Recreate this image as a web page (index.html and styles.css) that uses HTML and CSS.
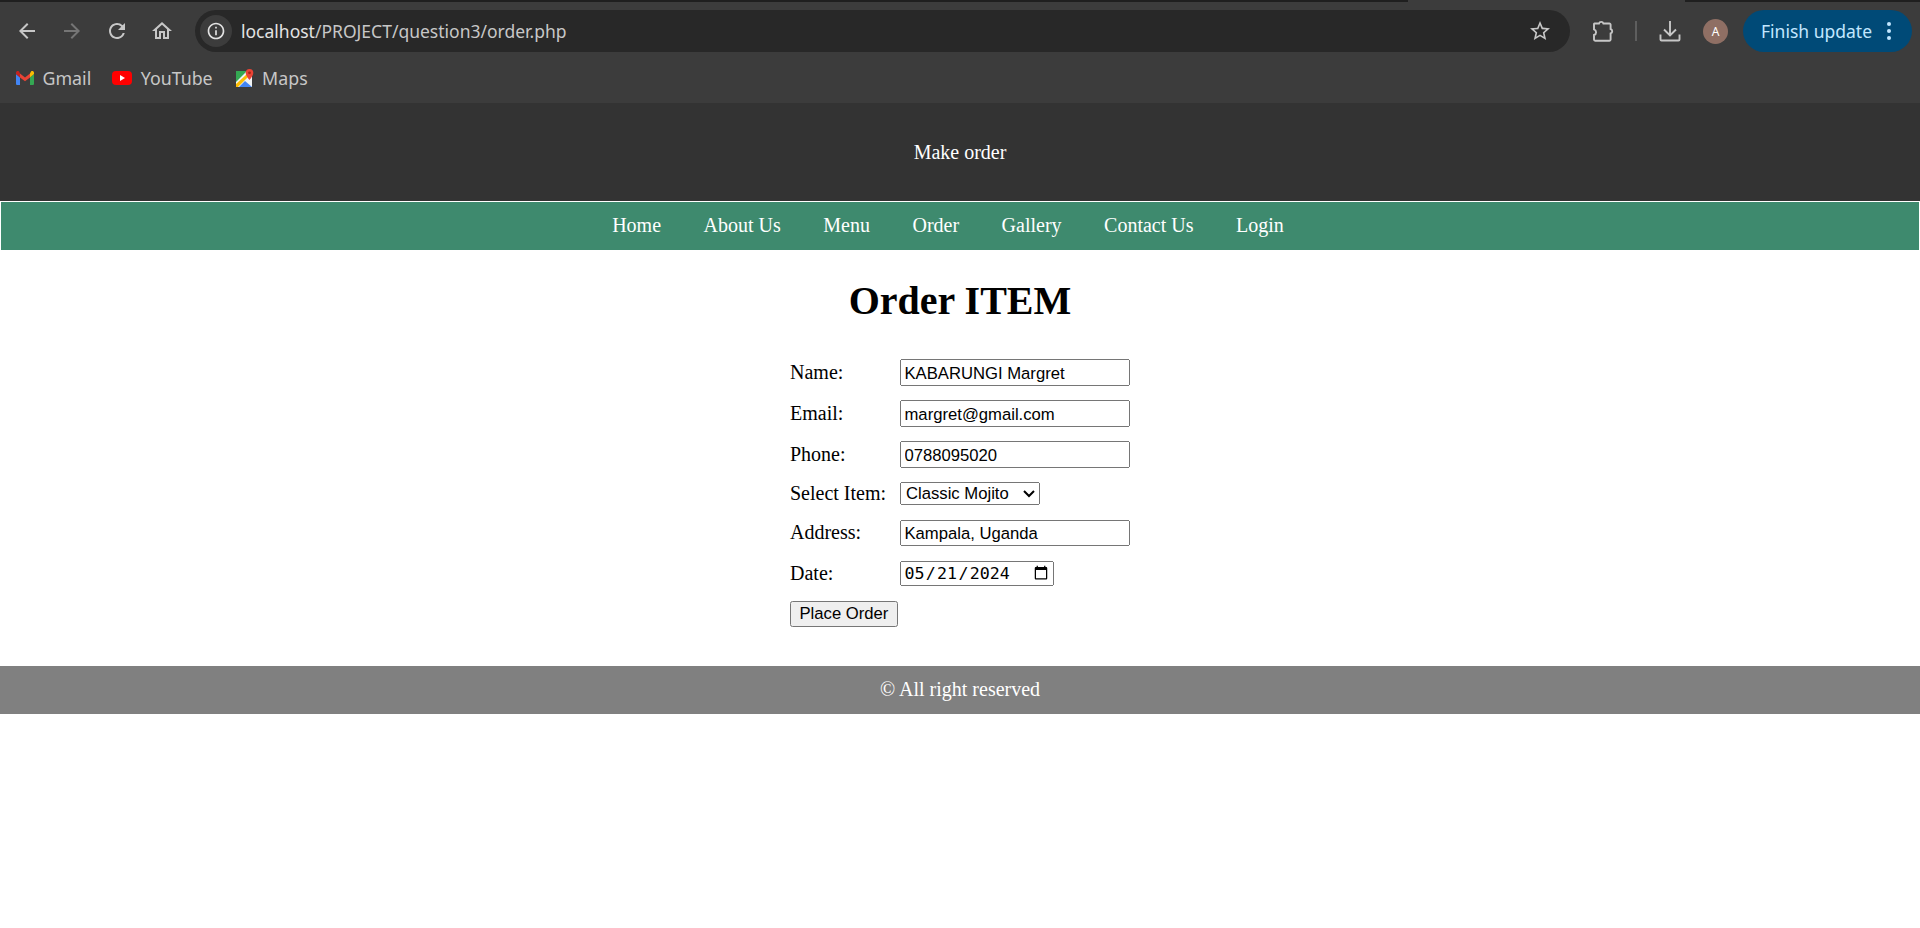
FILE: index.html
```html
<!DOCTYPE html>
<html lang="en">
    <head>
        <meta charset="UTF-8" />
        <meta name="viewport" content="width=device-width, initial-scale=1.0" />
        <title>Make order</title>
        <link rel="stylesheet" href="styles.css">
    </head>
    <body>
        <!-- Browser toolbar -->
        <div class="browser">
            <div class="tabstrip">
                <div class="tab-edge"></div>
                <div class="tab"></div>
                <div class="tab-rest"></div>
            </div>
            <div class="toolbar">
                <div class="nav-buttons">
                    <svg class="tool-icon" viewBox="0 0 24 24"><path d="M20 11H7.830l5.590-5.590L12 4l-8 8 8 8 1.410-1.410L7.830 13H20z"/></svg>
                    <svg class="tool-icon dim" viewBox="0 0 24 24"><path d="M4 11h12.170l-5.590-5.590L12 4l8 8-8 8-1.410-1.410L16.170 13H4z"/></svg>
                    <svg class="tool-icon" viewBox="0 0 24 24"><path d="M17.650 6.350A7.958 7.958 0 0 0 12 4c-4.420 0-7.990 3.580-7.990 8s3.570 8 7.990 8c3.730 0 6.840-2.550 7.730-6h-2.080A5.990 5.990 0 0 1 12 18c-3.310 0-6-2.690-6-6s2.690-6 6-6c1.660 0 3.140.690 4.220 1.780L13 11h7V4z"/></svg>
                    <svg class="tool-icon" viewBox="0 0 24 24"><path d="M12 5.690l5 4.500V18h-2v-6H9v6H7v-7.810l5-4.500M12 3L2 12h3v8h6v-6h2v6h6v-8h3L12 3z"/></svg>
                </div>
                <div class="address-bar">
                    <div class="site-chip">
                        <svg class="info-icon" viewBox="0 0 24 24"><path d="M11 7h2v2h-2zm0 4h2v6h-2zm1-9C6.480 2 2 6.480 2 12s4.480 10 10 10 10-4.480 10-10S17.520 2 12 2zm0 18c-4.410 0-8-3.590-8-8s3.590-8 8-8 8 3.590 8 8-3.590 8-8 8z"/></svg>
                    </div>
                    <div class="url"><span class="host">localhost</span>/PROJECT/question3/order.php</div>
                    <svg class="star-icon" viewBox="0 0 24 24"><path d="M22 9.240l-7.190-.620L12 2 9.190 8.630 2 9.240l5.460 4.730L5.820 21 12 17.270 18.180 21l-1.630-7.030L22 9.240zM12 15.400l-3.760 2.270 1-4.280-3.320-2.880 4.380-.380L12 6.100l1.710 4.040 4.380.380-3.320 2.880 1 4.280L12 15.400z"/></svg>
                </div>
                <div class="tool-right">
                    <svg class="ext-icon" viewBox="0 0 22 22"><path d="M2.500 3.500H7a2.300 2.300 0 0 1 4.400 0h6a1.200 1.200 0 0 1 1.200 1.200V9a2.300 2.300 0 0 1 0 4.400v6.200a1.200 1.200 0 0 1-1.200 1.200H3.200A1.200 1.200 0 0 1 2 19.600V15c2.800-1 2.800-4.600 0-5.600V4a.600.600 0 0 1 .500-.500z"/></svg>
                    <div class="separator"></div>
                    <svg class="download-icon" viewBox="0 0 22 22"><path d="M11 1v14M5 9.500l6 6 6-6M1.500 14.500v5a1 1 0 0 0 1 1h17a1 1 0 0 0 1-1v-5"/></svg>
                    <div class="avatar">A</div>
                    <div class="update-pill">
                        <span>Finish update</span>
                        <div class="dots"><i></i><i></i><i></i></div>
                    </div>
                </div>
            </div>
            <div class="bookmarks">
                <div class="bookmark">
                    <svg class="mark" viewBox="0 0 18 14">
                        <path fill="#4285f4" d="M0 3v9.600A1.200 1.200 0 0 0 1.200 14H4V6.600z"/>
                        <path fill="#34a853" d="M14 6.600V14h2.800a1.200 1.200 0 0 0 1.200-1.400V3z"/>
                        <path fill="#ea4335" d="M4 2.600 9 6.500l5-3.900v4L9 10.300 4 6.600z"/>
                        <path fill="#fbbc04" d="M14 2.600 15 .5c1.100-1 3-.3 3 1.300V3l-4 3.600z"/>
                        <path fill="#c5221f" d="M4 6.600V2.600L3 .5C1.900-.5 0 .2 0 1.800V3z"/>
                    </svg>
                    <span>Gmail</span>
                </div>
                <div class="bookmark">
                    <svg class="mark yt" viewBox="0 0 20 14">
                        <rect width="20" height="14" rx="4" fill="#f00"/>
                        <path fill="#fff" d="M8 4l5 3-5 3z"/>
                    </svg>
                    <span>YouTube</span>
                </div>
                <div class="bookmark maps-link">
                    <svg class="mark maps" viewBox="0 0 18 18">
                        <rect x="0" y="2" width="16" height="16" fill="#f1f3f4"/>
                        <path fill="#34a853" d="M0 2h11L0 13z"/>
                        <path fill="#fbbc04" d="M0 15 11 5l2 2L2 18H0z"/>
                        <path fill="#4285f4" d="M3 18l6-6 7 6z"/>
                        <path fill="#ea4335" d="M13.500 0A3.800 3.800 0 0 0 9.700 3.800c0 3 3.800 7.200 3.800 7.200s3.800-4.200 3.800-7.200A3.800 3.800 0 0 0 13.500 0z"/>
                        <circle cx="13.500" cy="3.800" r="1.400" fill="#a52714"/>
                    </svg>
                    <span>Maps</span>
                </div>
            </div>
        </div>

        <!-- Page -->
        <header class="site-header">
            <p>Make order</p>
        </header>
        <nav class="site-nav">
            <a href="#">Home</a>
            <a href="#">About Us</a>
            <a href="#">Menu</a>
            <a href="#">Order</a>
            <a href="#">Gallery</a>
            <a href="#">Contact Us</a>
            <a href="#">Login</a>
        </nav>
        <main>
            <h1>Order ITEM</h1>
            <form class="order-form">
                <div class="form-row">
                    <label for="name">Name:</label>
                    <input class="text-field" id="name" type="text" value="KABARUNGI Margret">
                </div>
                <div class="form-row">
                    <label for="email">Email:</label>
                    <input class="text-field" id="email" type="email" value="margret@gmail.com">
                </div>
                <div class="form-row">
                    <label for="phone">Phone:</label>
                    <input class="text-field" id="phone" type="text" value="0788095020">
                </div>
                <div class="form-row">
                    <label for="item">Select Item:</label>
                    <select class="item-select" id="item">
                        <option>Classic Mojito</option>
                    </select>
                </div>
                <div class="form-row">
                    <label for="address">Address:</label>
                    <input class="text-field" id="address" type="text" value="Kampala, Uganda">
                </div>
                <div class="form-row">
                    <label for="date">Date:</label>
                    <input class="date-field" id="date" type="date" value="2024-05-21">
                </div>
                <button class="submit-btn" type="button">Place Order</button>
            </form>
        </main>
        <footer class="site-footer">
            <p>&copy; All right reserved</p>
        </footer>
    </body>
</html>
```

FILE: styles.css
```css
body {
    margin: 0;
    background-color: white;
    font-family: "Liberation Serif", serif;
    font-size: 20px;
}

/* Browser toolbar */
.browser {
    background-color: #3c3c3c;
    font-family: "Noto Sans", sans-serif;
    height: 103px;
}

.tabstrip {
    display: flex;
    height: 2px;
}

.tab-edge {
    background-color: #1f1f1f;
    width: 1408px;
}

.tab {
    background-color: #3c3c3c;
    width: 277px;
}

.tab-rest {
    background-color: #1f1f1f;
    flex: 1;
}

.toolbar {
    display: flex;
    align-items: center;
    height: 42px;
    margin-top: 8px;
}

.nav-buttons {
    display: flex;
    gap: 21px;
    margin-left: 15px;
    width: 180px;
}

.tool-icon {
    width: 24px;
    height: 24px;
    fill: #c7c7c7;
}

.tool-icon.dim {
    fill: #757575;
}

.address-bar {
    display: flex;
    align-items: center;
    background-color: #282828;
    border-radius: 21px;
    height: 42px;
    width: 1375px;
}

.site-chip {
    display: flex;
    align-items: center;
    justify-content: center;
    background-color: #3c3c3c;
    border-radius: 50%;
    width: 32px;
    height: 32px;
    margin-left: 5px;
}

.info-icon {
    width: 20px;
    height: 20px;
    fill: #e3e3e3;
}

.url {
    color: #c7c7c7;
    font-size: 17.500px;
    margin-left: 9px;
    flex: 1;
}

.host {
    color: #e3e3e3;
}

.star-icon {
    width: 24px;
    height: 24px;
    fill: #c7c7c7;
    margin-right: 18px;
}

.tool-right {
    display: flex;
    align-items: center;
}

.ext-icon {
    width: 22px;
    height: 22px;
    margin-left: 22px;
    fill: none;
    stroke: #c7c7c7;
    stroke-width: 1.900;
}

.separator {
    background-color: #5e5e5e;
    width: 2px;
    height: 20px;
    margin-left: 21px;
}

.download-icon {
    width: 22px;
    height: 22px;
    margin-left: 22px;
    fill: none;
    stroke: #c7c7c7;
    stroke-width: 1.900;
}

.avatar {
    display: flex;
    align-items: center;
    justify-content: center;
    background-color: #8f6f64;
    border-radius: 50%;
    color: white;
    font-size: 12px;
    width: 25px;
    height: 25px;
    margin-left: 22px;
}

.update-pill {
    display: flex;
    align-items: center;
    background-color: #004a77;
    border-radius: 21px;
    color: #c2e7ff;
    font-size: 17.500px;
    height: 42px;
    width: 169px;
    margin-left: 15px;
    padding-left: 18px;
    box-sizing: border-box;
}

.dots {
    display: flex;
    flex-direction: column;
    gap: 3px;
    margin-left: 15px;
}

.dots i {
    background-color: #c2e7ff;
    border-radius: 50%;
    width: 4px;
    height: 4px;
}

.bookmarks {
    display: flex;
    align-items: center;
    height: 41px;
    color: #c7c7c7;
    font-size: 17.800px;
    padding-left: 16px;
    gap: 21px;
    margin-top: 5px;
}

.bookmark {
    display: flex;
    align-items: center;
    gap: 8.500px;
}

.maps-link {
    margin-left: 2px;
}

.mark {
    width: 18px;
    height: 14px;
}

.mark.yt {
    width: 20px;
}

.mark.maps {
    height: 18px;
}

/* Page */
.site-header {
    background-color: #333;
    color: white;
    height: 98px;
    text-align: center;
}

.site-header p {
    margin: 0;
    padding-top: 38px;
}

.site-nav {
    display: flex;
    justify-content: center;
    align-items: center;
    gap: 42.500px;
    background-color: #3e8a6e;
    border: 1px solid white;
    border-bottom: 0;
    height: 46px;
    padding-right: 24px;
    padding-bottom: 2px;
    box-sizing: content-box;
}

.site-nav a {
    color: white;
    text-decoration: none;
}

main {
    height: 416px;
    overflow: hidden;
}

h1 {
    font-size: 40px;
    text-align: center;
    margin: 27px 0 0;
}

.order-form {
    zoom: 1.250;
    display: flex;
    flex-direction: column;
    align-items: flex-start;
    gap: 11.600px;
    width: 272px;
    margin: 28px auto 0;
    font-size: 16px;
}

.form-row {
    display: flex;
    align-items: center;
}

.form-row label {
    width: 88px;
}

.text-field {
    font-family: "Liberation Sans", sans-serif;
    box-sizing: border-box;
    width: 184px;
    padding: 2px 2px 0;
}

.item-select {
    font-family: "Liberation Sans", sans-serif;
    width: 112px;
}

.date-field {
    font-family: "DejaVu Sans Mono", monospace;
}

.submit-btn {
    font-family: "Liberation Sans", sans-serif;
}

.site-footer {
    background-color: gray;
    color: white;
    height: 46px;
    padding-bottom: 2px;
    display: flex;
    align-items: center;
    justify-content: center;
}

.site-footer p {
    margin: 0;
}
```
